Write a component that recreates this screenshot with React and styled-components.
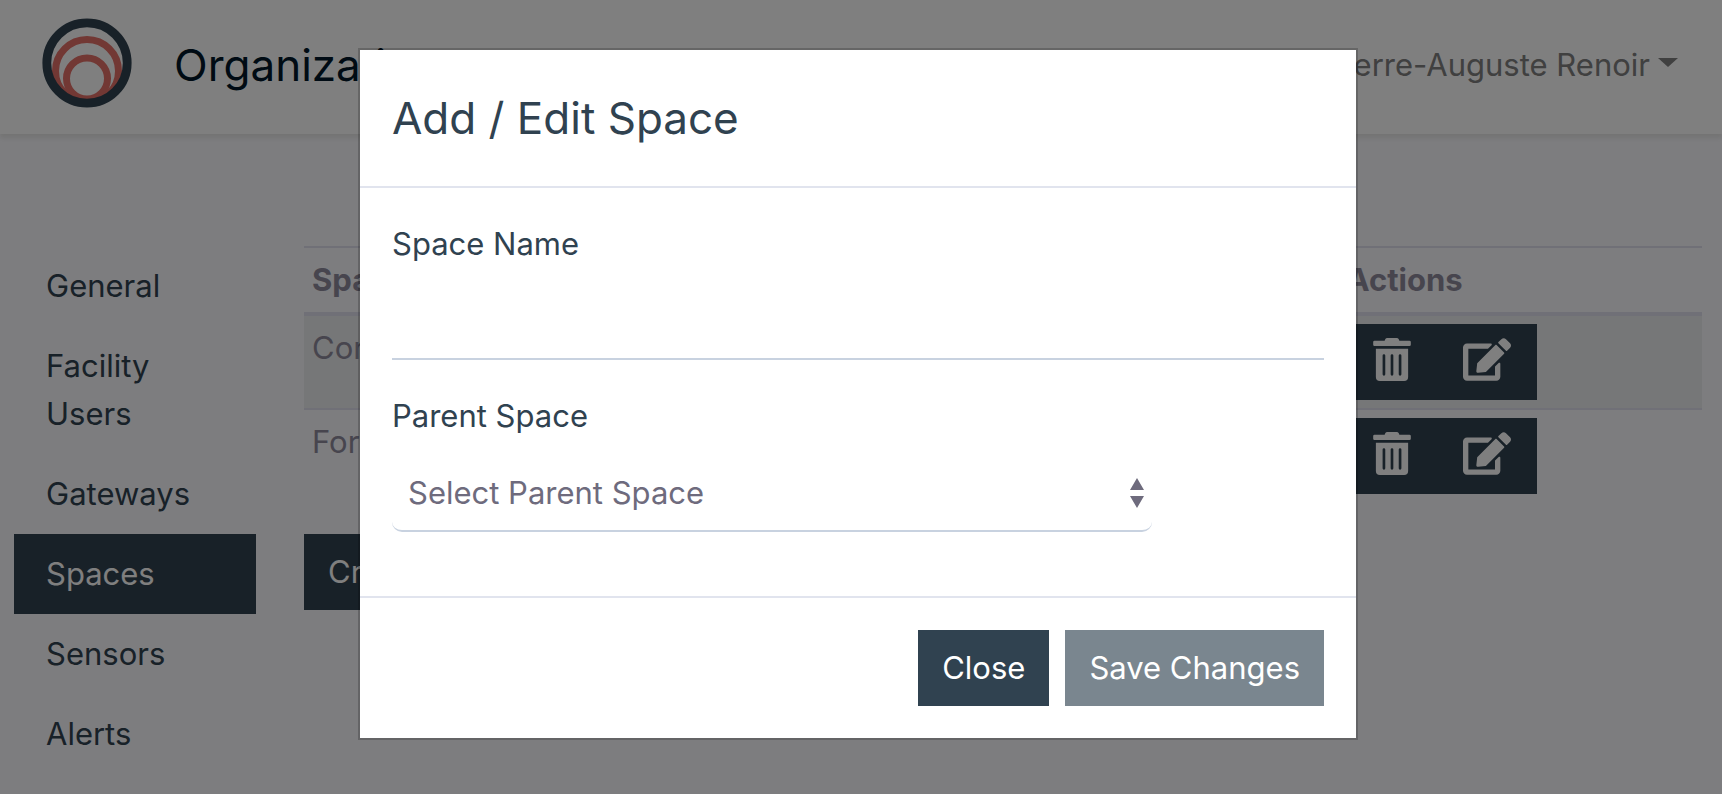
import React, { useState } from "react";
import styled, { createGlobalStyle } from "styled-components";
import { FaEdit, FaTrashAlt } from "react-icons/fa";

const navItems = [
  "General",
  "Facility Users",
  "Gateways",
  "Spaces",
  "Sensors",
  "Alerts",
];

const spaces = [
  { id: 1, name: "Conference Room", parent: "Main Building" },
  { id: 2, name: "Forum", parent: "Main Building" },
];

const Logo = () => (
  <LogoSvg viewBox="0 0 90 90" role="img" aria-label="Logo">
    <g fill="none">
      <circle cx="45" cy="53" r="31.5" stroke="#e47068" strokeWidth="7" />
      <circle cx="45" cy="60.5" r="20.5" stroke="#e47068" strokeWidth="7" />
      <circle cx="45" cy="45" r="40.2" stroke="#304250" strokeWidth="8.8" />
    </g>
  </LogoSvg>
);

const SelectArrows = () => (
  <ArrowsSvg viewBox="0 0 14 30" aria-hidden="true">
    <path d="M7 0L0 12h14zM7 30L0 18h14z" fill="#6e6b7d" />
  </ArrowsSvg>
);

const App = () => {
  const [isOpen, setIsOpen] = useState(true);
  const [spaceName, setSpaceName] = useState("");
  const [parentSpace, setParentSpace] = useState("");

  const toggle = () => {
    setIsOpen(!isOpen);
  };

  return (
    <>
      <GlobalStyle />
      <Page>
        <Navbar>
          <Logo />
          <PageTitle>Organization</PageTitle>
          <UserMenu type="button">
            Pierre-Auguste Renoir
            <Caret />
          </UserMenu>
        </Navbar>

        <Main>
          <Sidebar>
            {navItems.map((item) => (
              <NavLink key={item} href="#" $active={item === "Spaces"}>
                {item}
              </NavLink>
            ))}
          </Sidebar>

          <Content>
            <Table>
              <thead>
                <tr>
                  <Th>Space Name</Th>
                  <Th>Parent Space</Th>
                  <Th $width="26%">Actions</Th>
                </tr>
              </thead>
              <tbody>
                {spaces.map((space) => (
                  <Row key={space.id}>
                    <Td>{space.name}</Td>
                    <Td>{space.parent}</Td>
                    <Td>
                      <Actions>
                        <IconButton
                          type="button"
                          aria-label="Delete"
                          $iconWidth="38px"
                        >
                          <FaTrashAlt />
                        </IconButton>
                        <IconButton
                          type="button"
                          aria-label="Edit"
                          $iconWidth="48px"
                          onClick={toggle}
                        >
                          <FaEdit />
                        </IconButton>
                      </Actions>
                    </Td>
                  </Row>
                ))}
              </tbody>
            </Table>
            <Button type="button" onClick={toggle}>
              Create
            </Button>
          </Content>
        </Main>
      </Page>

      {isOpen && (
        <Backdrop>
          <Modal role="dialog" aria-labelledby="modal-title">
            <ModalHeader>
              <ModalTitle id="modal-title">Add / Edit Space</ModalTitle>
            </ModalHeader>

            <ModalBody>
              <FormGroup>
                <Label htmlFor="space-name">Space Name</Label>
                <Input
                  id="space-name"
                  type="text"
                  value={spaceName}
                  onChange={(e) => setSpaceName(e.target.value)}
                />
              </FormGroup>
              <FormGroup>
                <Label htmlFor="parent-space">Parent Space</Label>
                <SelectWrapper>
                  <Select
                    id="parent-space"
                    value={parentSpace}
                    onChange={(e) => setParentSpace(e.target.value)}
                  >
                    <option value="">Select Parent Space</option>
                    {spaces.map((space) => (
                      <option key={space.id} value={space.id}>
                        {space.name}
                      </option>
                    ))}
                  </Select>
                  <SelectArrows />
                </SelectWrapper>
              </FormGroup>
            </ModalBody>

            <ModalFooter>
              <Button type="button" onClick={toggle}>
                Close
              </Button>
              <Button type="button" disabled={!spaceName}>
                Save Changes
              </Button>
            </ModalFooter>
          </Modal>
        </Backdrop>
      )}
    </>
  );
};

const GlobalStyle = createGlobalStyle`
  *, *::before, *::after {
    box-sizing: border-box;
  }

  body {
    margin: 0;
    background: #fafafe;
    color: #8e8b9c;
    font-family: Inter, "Liberation Sans", sans-serif;
    font-size: 31px;
    line-height: 48px;
  }

  button, input, select {
    font: inherit;
  }
`;

const Page = styled.div`
  min-height: 100vh;
`;

const Navbar = styled.header`
  display: flex;
  align-items: center;
  height: 134px;
  padding: 0 44px 8px 42px;
  background: #fff;
  box-shadow: 0 4px 4px rgba(80, 80, 40, 0.1);
`;

const LogoSvg = styled.svg`
  width: 90px;
  height: 90px;
`;

const PageTitle = styled.h1`
  margin: 0 auto 0 42px;
  padding-top: 4px;
  color: #001628;
  font-size: 44px;
  font-weight: 400;
  line-height: 72px;
`;

const UserMenu = styled.button`
  display: flex;
  align-items: center;
  gap: 8px;
  padding: 4px 0 0;
  border: 0;
  background: none;
  color: #808080;
  cursor: pointer;
`;

const Caret = styled.span`
  border-top: 9px solid;
  border-left: 10px solid transparent;
  border-right: 10px solid transparent;
  margin-bottom: 6px;
`;

const Main = styled.main`
  display: flex;
  align-items: flex-start;
  gap: 48px;
  padding: 112px 20px 20px 14px;
`;

const Sidebar = styled.nav`
  display: flex;
  flex: 0 0 242px;
  flex-direction: column;
`;

const NavLink = styled.a`
  padding: 16px 32px;
  background: ${({ $active }) => ($active ? "#304250" : "transparent")};
  color: ${({ $active }) => ($active ? "#fff" : "#304250")};
  text-decoration: none;
`;

const Content = styled.section`
  flex: 1;
  min-width: 0;
`;

const Table = styled.table`
  width: 100%;
  margin-bottom: 32px;
  border-collapse: separate;
  border-spacing: 0;
  table-layout: fixed;
`;

const Th = styled.th`
  width: ${({ $width }) => $width || "auto"};
  padding: 8px;
  border-top: 2px solid #e1e1ef;
  border-bottom: 4px solid #e1e1ef;
  font-weight: 700;
  text-align: left;
`;

const Td = styled.td`
  padding: 8px;
  vertical-align: top;
`;

const Row = styled.tr`
  &:nth-of-type(odd) {
    background: #edeef0;
  }

  & + & ${Td} {
    border-top: 2px solid #e1e1ef;
  }
`;

const Actions = styled.div`
  display: flex;
`;

const Button = styled.button`
  padding: 14px 24px;
  border: 0;
  background: #304250;
  color: #fff;
  cursor: pointer;

  &:disabled {
    background: #7a868f;
    cursor: default;
  }
`;

const IconButton = styled(Button)`
  display: flex;
  height: 76px;
  padding: 14px 26px;

  svg {
    flex: none;
    width: ${({ $iconWidth }) => $iconWidth};
    height: 43px;
  }
`;

const Backdrop = styled.div`
  position: fixed;
  inset: 0;
  display: flex;
  align-items: flex-start;
  justify-content: center;
  padding: 48px 22px 48px 16px;
  overflow-y: auto;
  background: rgba(0, 0, 0, 0.5);
`;

const Modal = styled.div`
  width: 100%;
  max-width: 1000px;
  border: 2px solid rgba(0, 0, 0, 0.2);
  background: #fff;
  background-clip: padding-box;
  color: #304250;
`;

const ModalHeader = styled.div`
  padding: 32px;
  border-bottom: 2px solid #e1e4ee;
`;

const ModalTitle = styled.h2`
  margin: 0;
  font-size: 44px;
  font-weight: 400;
  line-height: 72px;
`;

const ModalBody = styled.div`
  padding: 32px 32px 0;
`;

const FormGroup = styled.div`
  display: flex;
  flex-direction: column;
  gap: 16px;
  padding-bottom: 32px;

  &:last-child {
    padding-bottom: 64px;
  }
`;

const Label = styled.label`
  align-self: flex-start;
`;

const Input = styled.input`
  height: 76px;
  padding: 12px 16px;
  border: 0;
  border-bottom: 2px solid #c8d2e0;
  border-radius: 0;
  outline: 0;
  background: transparent;
  color: #6e6b7d;
`;

const SelectWrapper = styled.div`
  position: relative;
  width: 100%;
  max-width: 760px;
`;

const Select = styled.select`
  display: block;
  width: 100%;
  height: 76px;
  padding: 12px 48px 12px 16px;
  border: 0;
  border-bottom: 2px solid #c8d2e0;
  border-radius: 10px;
  outline: 0;
  appearance: none;
  background: transparent;
  color: #6e6b7d;
`;

const ArrowsSvg = styled.svg`
  position: absolute;
  top: 22px;
  right: 8px;
  width: 14px;
  height: 30px;
  pointer-events: none;
`;

const ModalFooter = styled.div`
  display: flex;
  justify-content: flex-end;
  gap: 16px;
  padding: 32px;
  border-top: 2px solid #e1e4ee;
`;

export default App;
